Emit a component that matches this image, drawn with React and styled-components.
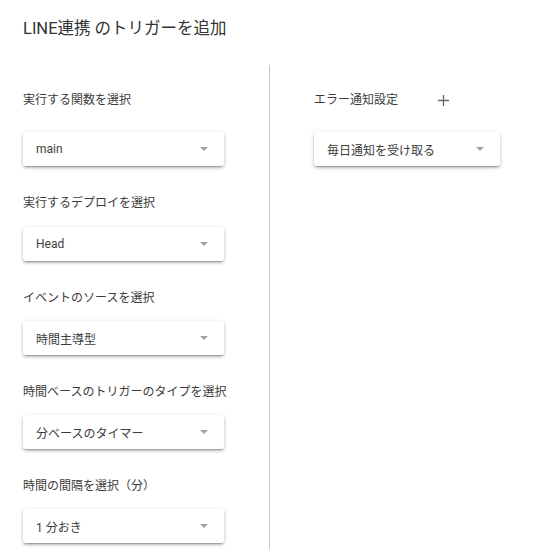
import React from "react";
import styled, { createGlobalStyle } from "styled-components";

const GlobalStyle = createGlobalStyle`
  body {
    margin : 0;
    background : #fff;
    font-family : Roboto, "Noto Sans CJK JP", sans-serif;
    color : #202124;
  }
`;

const Page = styled.div`
  width : 548px;
  height : 549px;
  overflow : hidden;
`;

const Header = styled.div`
  height : 65px;
  padding : 20px 0 0 23px;
  box-sizing : border-box;
`;

const Title = styled.h1`
  margin : 0;
  font-size : 16.5px;
  font-weight : 400;
  line-height : 18px;
  color : #333;
`;

const Columns = styled.div`
  display : flex;
  align-items : stretch;
  height : 520px;
`;

const LeftColumn = styled.div`
  width : 246px;
  padding : 27px 0 0 23px;
  border-right : 1px solid #c8c8c8;
`;

const RightColumn = styled.div`
  flex : 1;
  padding : 27px 0 0 44px;
`;

const Section = styled.div`
  margin-bottom : 29px;
`;

const LabelRow = styled.div`
  display : flex;
  align-items : center;
  height : 16px;
  margin-bottom : ${({ $gap }) => $gap}px;
`;

const Label = styled.div`
  font-size : 12px;
  line-height : 16px;
  color : #3c3c3c;
`;

const AddButton = styled.div`
  display : flex;
  margin-left : 40px;
  width : 11px;
  height : 11px;
  cursor : pointer;
`;

const Select = styled.div`
  display : flex;
  align-items : center;
  justify-content : space-between;
  width : ${({ $width }) => $width}px;
  height : 34px;
  padding : 0 16px 0 13px;
  box-sizing : border-box;
  background : #fff;
  border-radius : 3px;
  box-shadow : 0 2px 3px rgba(0, 0, 0, 0.2), 0 1px 5px rgba(0, 0, 0, 0.12),
    0 3px 1px -2px rgba(0, 0, 0, 0.2);
  font-size : 12px;
  color : #3c3c3c;
  cursor : pointer;
`;

const Arrow = styled.span`
  width : 0;
  height : 0;
  border-left : 4px solid transparent;
  border-right : 4px solid transparent;
  border-top : 4px solid #a0a0a0;
`;

const fields = [
  { label: "実行する関数を選択", value: "main", gap: 24 },
  { label: "実行するデプロイを選択", value: "Head", gap: 16 },
  { label: "イベントのソースを選択", value: "時間主導型", gap: 15 },
  { label: "時間ベースのトリガーのタイプを選択", value: "分ベースのタイマー", gap: 15 },
  { label: "時間の間隔を選択（分）", value: "1 分おき", gap: 15 },
];

const Field = ({ label, value, gap, width = 201, children }) => (
  <Section>
    <LabelRow $gap={gap}>
      <Label>{label}</Label>
      {children}
    </LabelRow>
    <Select $width={width}>
      <span>{value}</span>
      <Arrow />
    </Select>
  </Section>
);

export default function App() {
  return (
    <Page>
      <GlobalStyle />
      <Header>
        <Title>LINE連携 のトリガーを追加</Title>
      </Header>
      <Columns>
        <LeftColumn>
          {fields.map((f) => (
            <Field key={f.label} {...f} />
          ))}
        </LeftColumn>
        <RightColumn>
          <Field label="エラー通知設定" value="毎日通知を受け取る" gap={24} width={186}>
            <AddButton>
              <svg width="11" height="11" viewBox="0 0 11 11">
                <path d="M5.5 0v11M0 5.5h11" stroke="#666" strokeWidth="1.3" />
              </svg>
            </AddButton>
          </Field>
        </RightColumn>
      </Columns>
    </Page>
  );
}
